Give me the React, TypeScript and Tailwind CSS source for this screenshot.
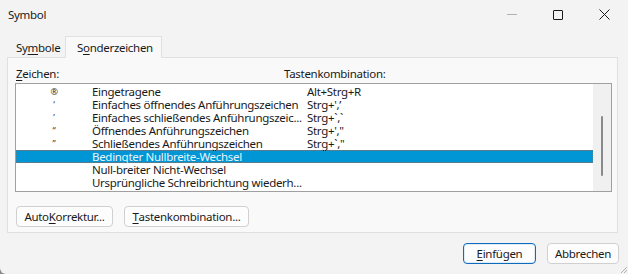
import React from "react";

const rows = [
  { sym: "®", name: "Eingetragene", keys: "Alt+Strg+R" },
  { sym: "‘", name: "Einfaches öffnendes Anführungszeichen", keys: "Strg+',’" },
  { sym: "’", name: "Einfaches schließendes Anführungszeic...", keys: "Strg+`,`" },
  { sym: "“", name: "Öffnendes Anführungszeichen", keys: "Strg+',\"" },
  { sym: "”", name: "Schließendes Anführungszeichen", keys: "Strg+`,\"" },
  { sym: "", name: "Bedingter Nullbreite-Wechsel", keys: "" },
  { sym: "", name: "Null-breiter Nicht-Wechsel", keys: "" },
  { sym: "", name: "Ursprüngliche Schreibrichtung wiederh...", keys: "" },
];

const Btn = ({ children, w, primary }: { children: React.ReactNode; w: string; primary?: boolean }) => (
  <div
    className={`${w} h-[21px] flex items-center justify-center rounded-[4px] bg-[#fdfdfd] ${
      primary ? "border border-[#0f6cbd] shadow-[inset_0_0_0_1px_#0f6cbd20]" : "border border-[#d0d0d0]"
    }`}
  >
    {children}
  </div>
);

export default function App() {
  return (
    <div
      className="w-[628px] h-[274px] bg-[#f3f3f3] text-[11.5px] tracking-[-0.3px] text-[#1a1a1a] relative overflow-hidden flex flex-col"
      style={{ fontFamily: '"Noto Sans", "Open Sans", sans-serif' }}
    >
      {/* title bar */}
      <div className="h-[29px] flex items-center shrink-0">
        <span className="pl-[8px]">Symbol</span>
        <div className="ml-auto flex items-center h-full">
          <div className="w-[46px] h-full flex items-center justify-center">
            <div className="w-[10px] h-px bg-[#b0b0b0]" />
          </div>
          <div className="w-[46px] h-full flex items-center justify-center">
            <div className="w-[10px] h-[10px] border border-[#1a1a1a] rounded-[1px]" />
          </div>
          <div className="w-[46px] h-full flex items-center justify-center mr-[1px]">
            <svg width="11" height="11" viewBox="0 0 11 11">
              <path d="M0.5 0.5L10.5 10.5M10.5 0.5L0.5 10.5" stroke="#1a1a1a" strokeWidth="1" />
            </svg>
          </div>
        </div>
      </div>

      {/* tabs */}
      <div className="h-[21px] mt-[7px] flex items-end pl-[7px] shrink-0 relative z-10">
        <div className="h-[19px] w-[58px] flex items-center pl-[9px]">
          Sy<span className="underline underline-offset-2">m</span>bole
        </div>
        <div className="h-[22px] w-[97px] flex items-center pl-[11px] bg-[#f9f9f9] border border-b-0 border-[#e0e0e0] -mb-px">
          S<span className="underline underline-offset-2">o</span>nderzeichen
        </div>
      </div>

      {/* panel */}
      <div className="mx-[7px] w-[611px] h-[176px] bg-[#f9f9f9] border border-[#e0e0e0] flex flex-col shrink-0">
        <div className="h-[25px] flex items-end pb-[2px] pl-[8px] leading-[14px]">
          <span className="w-[268px]">
            <span className="underline underline-offset-2">Z</span>eichen:
          </span>
          <span>Tastenkombination:</span>
        </div>
        <div className="ml-[7px] w-[597px] h-[109px] bg-white border border-[#a0a0a0] flex">
          <div className="flex-1 pt-[1px]">
            {rows.map((r, i) => (
              <div
                key={i}
                className={`h-[13px] leading-[13px] flex whitespace-nowrap ${
                  i === 5 ? "bg-[#0096d6] text-[#e8f4fb] outline outline-1 outline-dotted outline-[#5a7f8f] -outline-offset-1" : ""
                }`}
              >
                <span className="w-[76px] text-center text-[9px] text-[#333]">{r.sym}</span>
                <span className="w-[215px]">{r.name}</span>
                <span>{r.keys}</span>
              </div>
            ))}
          </div>
          <div className="w-[18px] bg-[#f0f0f0] relative">
            <div className="absolute left-[8px] top-[32px] w-[2px] h-[60px] bg-[#8a8a8a] rounded-full" />
          </div>
        </div>
        <div className="flex gap-[11px] pl-[8px] mt-[14px]">
          <Btn w="w-[97px]">
            Auto<span className="underline underline-offset-2">K</span>orrektur...
          </Btn>
          <Btn w="w-[125px]">
            <span className="underline underline-offset-2">T</span>astenkombination...
          </Btn>
        </div>
      </div>

      {/* bottom buttons */}
      <div className="flex justify-end gap-[11px] pr-[9px] mt-[10px]">
        <Btn w="w-[73px]" primary>
          <span className="underline underline-offset-2">E</span>infügen
        </Btn>
        <Btn w="w-[72px]">Abbrechen</Btn>
      </div>

      {/* resize grip */}
      <svg className="absolute right-0 bottom-0" width="10" height="10" viewBox="0 0 10 10">
        <path d="M9 3L3 9M9 6L6 9" stroke="#b0b0b0" strokeWidth="1" />
      </svg>
      {/* rounded corner bottom-left */}
      <div className="absolute left-0 bottom-0 w-[6px] h-[6px] bg-[#8a8a8a]">
        <div className="w-full h-full bg-[#f3f3f3] rounded-bl-[6px]" />
      </div>
    </div>
  );
}
